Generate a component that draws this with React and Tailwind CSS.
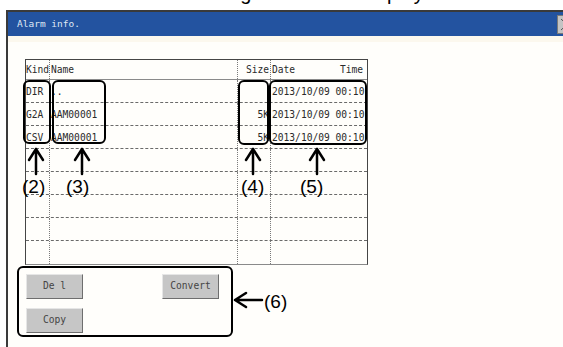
import React from 'react';

const rows = [
  { kind: 'DIR', name: '..', size: '', date: '2013/10/09 00:10' },
  { kind: 'G2A', name: 'AAM00001', size: '5K', date: '2013/10/09 00:10' },
  { kind: 'CSV', name: 'AAM00001', size: '5K', date: '2013/10/09 00:10' },
  {}, {}, {}, {}, {},
];

const mono = "font-['DejaVu_Sans_Mono','Liberation_Mono',monospace]";

const Cell = ({ className = '', children, last }) => (
  <div className={`h-full flex items-center overflow-hidden whitespace-nowrap ${last ? '' : 'border-r border-dotted border-[#7a7a7a]'} ${className}`}>
    {children}
  </div>
);

const Row = ({ r, header, last }) => (
  <div
    className={`grid grid-cols-[24px_188px_33px_96px] ${header ? 'h-[20px] border-b border-solid border-[#8a8a8a]' : 'h-[23px]'} ${!header && !last ? 'border-b border-dashed border-[#6a6a6a]' : ''}`}
  >
    <Cell className="pt-[2px]">{header ? 'Kind' : r.kind}</Cell>
    <Cell className="pl-[1px] pt-[2px]">{header ? 'Name' : r.name}</Cell>
    <Cell className="justify-end pr-[1px] pt-[2px]">{header ? 'Size' : r.size}</Cell>
    <Cell last className="justify-between pl-[1px] pr-[4px] pt-[2px]">
      {header ? (
        <>
          <span>Date</span>
          <span>Time</span>
        </>
      ) : (
        <span>{r.date}</span>
      )}
    </Cell>
  </div>
);

const GotButton = ({ children, className = '' }) => (
  <button
    className={`h-[25px] bg-[#c6c6c6] border border-t-[#e6e6e6] border-l-[#e6e6e6] border-b-[#6e6e6e] border-r-[#6e6e6e] text-[9.6px] text-[#444] ${mono} ${className}`}
  >
    {children}
  </button>
);

const Box = ({ className }) => (
  <div className={`absolute border-[2.5px] border-black rounded-[6px] ${className}`} />
);

const Label = ({ className, children }) => (
  <div className={`absolute text-[19px] leading-none text-black font-['Liberation_Sans',Arial,sans-serif] ${className}`}>
    {children}
  </div>
);

export default function App() {
  return (
    <div className="relative w-[563px] h-[347px] overflow-hidden bg-white">
      {/* heading above the screen, only its descenders show */}
      <div className="h-[10px] overflow-hidden">
        <div className="-mt-[17px] pl-[167px] text-[20px] leading-[20px] whitespace-nowrap font-['Liberation_Sans',Arial,sans-serif] text-black">
          Alarm log information display
        </div>
      </div>

      {/* GOT window */}
      <div className="ml-[6px] w-[574px] h-[340px] border-t-2 border-l-2 border-[#3a3a3a] bg-[#fffefb]">
        <div className="h-[24px] bg-[#2353a0] flex items-center justify-between pl-[9px]">
          <span className={`text-[9.5px] text-[#dfe7f3] ${mono}`}>Alarm info.</span>
          <div className="w-[20px] h-[19px] mr-[3px] bg-[#c4c4c4] border border-[#7a7a7a] relative">
            <svg width="18" height="17" viewBox="0 0 18 17" className="absolute inset-0">
              <path d="M3 3 L15 14 M15 3 L3 14" stroke="#555" strokeWidth="1" />
            </svg>
          </div>
        </div>
        <div className="h-[6px] bg-[#fcf8ee]" />

        <div className="pt-[17px] pl-[17px]">
          <div className={`w-[343px] border border-[#454545] border-b-[#8a8a8a] text-[9.6px] text-[#2a2a2a] ${mono}`}>
            <Row header />
            {rows.map((r, i) => (
              <Row key={i} r={r} last={i === rows.length - 1} />
            ))}
          </div>

          <div className="pl-[1px] pt-[9px] flex flex-col gap-[9px]">
            <div className="flex">
              <GotButton className="w-[57px]">De l</GotButton>
              <GotButton className="w-[57px] ml-[79px]">Convert</GotButton>
            </div>
            <div className="flex">
              <GotButton className="w-[57px]">Copy</GotButton>
            </div>
          </div>
        </div>
      </div>

      {/* annotation overlay */}
      <Box className="left-[23px] top-[80px] w-[28px] h-[64px]" />
      <Box className="left-[52px] top-[80px] w-[54px] h-[64px]" />
      <Box className="left-[238px] top-[80px] w-[31px] h-[65px]" />
      <Box className="left-[269px] top-[80px] w-[98px] h-[65px]" />
      <Box className="left-[17px] top-[266px] w-[216px] h-[71px]" />

      <svg className="absolute left-0 top-0 pointer-events-none" width="563" height="347">
        <g stroke="#000" strokeWidth="2.5" fill="none" strokeLinecap="round" strokeLinejoin="round">
          <path d="M36 149 V174 M29 160 L36 149 L43 160" />
          <path d="M82 149 V174 M75 160 L82 149 L89 160" />
          <path d="M253 149 V174 M246 160 L253 149 L260 160" />
          <path d="M317 149 V174 M310 160 L317 149 L324 160" />
          <path d="M235 300 H262 M246 293 L235 300 L246 307" />
        </g>
      </svg>

      <Label className="left-[22px] top-[177px]">(2)</Label>
      <Label className="left-[66px] top-[177px]">(3)</Label>
      <Label className="left-[241px] top-[177px]">(4)</Label>
      <Label className="left-[300px] top-[177px]">(5)</Label>
      <Label className="left-[264px] top-[292px]">(6)</Label>
    </div>
  );
}
